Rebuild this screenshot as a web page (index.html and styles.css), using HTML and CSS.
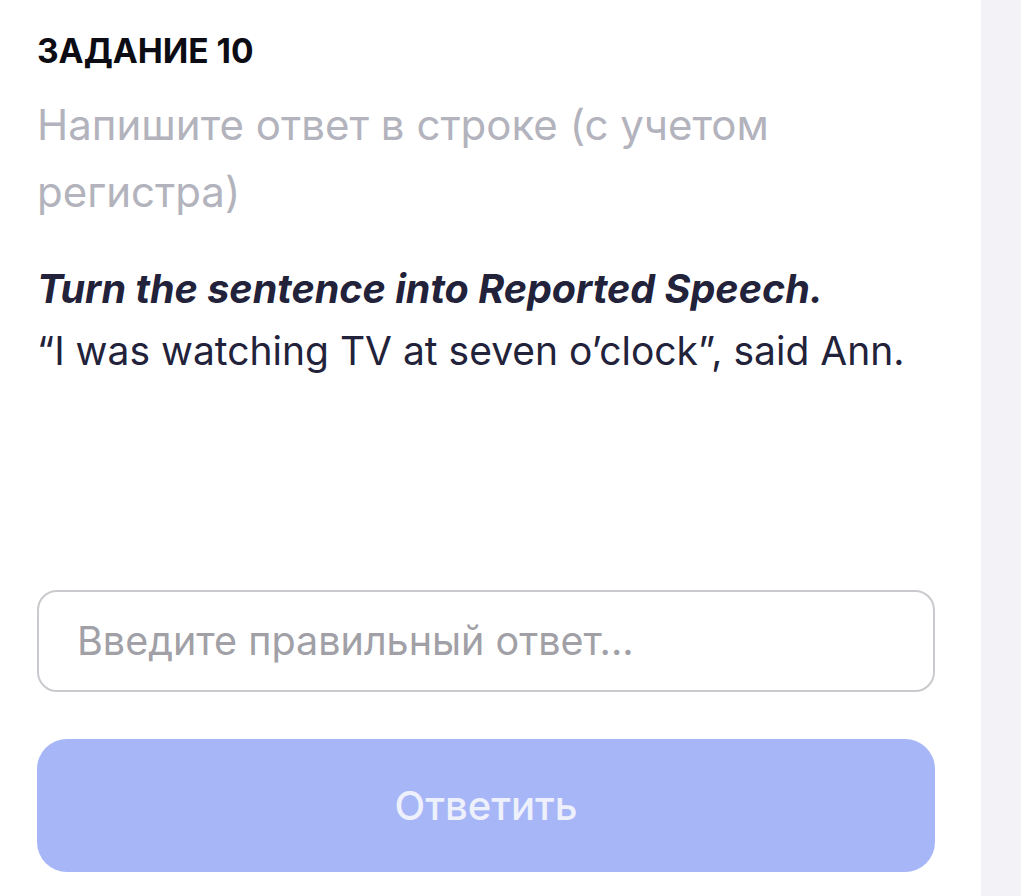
FILE: index.html
```html
<!DOCTYPE html>
<html lang="ru">
<head>
  <meta charset="UTF-8">
  <meta name="viewport" content="width=device-width, initial-scale=1.0">
  <title>Задание 10</title>
  <link rel="stylesheet" href="styles.css">
</head>
<body>
  <div class="page">
    <main class="task">
      <h1 class="task-title">ЗАДАНИЕ 10</h1>
      <p class="task-hint">Напишите ответ в строке (с учетом регистра)</p>

      <div class="task-text">
        <p class="task-instruction">Turn the sentence into Reported Speech.</p>
        <p class="task-sentence">“I was watching TV at seven o’clock”, said Ann.</p>
      </div>

      <form class="answer-form">
        <input type="text" class="answer-input" placeholder="Введите правильный ответ...">
        <button type="button" class="answer-button" disabled>Ответить</button>
      </form>
    </main>
    <aside class="side"></aside>
  </div>
</body>
</html>
```

FILE: styles.css
```css
html, body {
  margin: 0;
  padding: 0;
  height: 100%;
}

body {
  font-family: Inter, "Noto Sans", Arial, sans-serif;
  background: #ffffff;
}

.page {
  display: flex;
  height: 100%;
}

.task {
  width: 981px;
  box-sizing: border-box;
  padding: 31px 46px 0 37px;
  background: #ffffff;
}

.side {
  flex: 1;
  background: #f2f2f7;
}

.task-title {
  margin: 0;
  font-size: 33.5px;
  font-weight: 700;
  line-height: 40px;
  color: #0c0c14;
}

.task-hint {
  margin: 20px 0 0;
  font-size: 42px;
  line-height: 67px;
  color: #b3b3bd;
}

.task-text {
  margin-top: 33px;
  color: #22223a;
}

.task-text p {
  margin: 0;
  line-height: 62px;
}

.task-instruction {
  font-size: 39.5px;
  font-style: italic;
  font-weight: 700;
}

.task-sentence {
  font-size: 39px;
}

.answer-form {
  margin-top: 208px;
  display: flex;
  flex-direction: column;
  gap: 47px;
}

.answer-input {
  height: 102px;
  box-sizing: border-box;
  padding: 0 38px;
  border: 2px solid #cacace;
  border-radius: 20px;
  font-family: inherit;
  font-size: 39.5px;
  color: #22223a;
  outline: none;
}

.answer-input::placeholder {
  color: #a0a0a6;
}

.answer-button {
  height: 133px;
  border: none;
  border-radius: 30px;
  background: #a6b6f7;
  color: #eef0fc;
  font-family: inherit;
  font-size: 40px;
  font-weight: 500;
}
```
